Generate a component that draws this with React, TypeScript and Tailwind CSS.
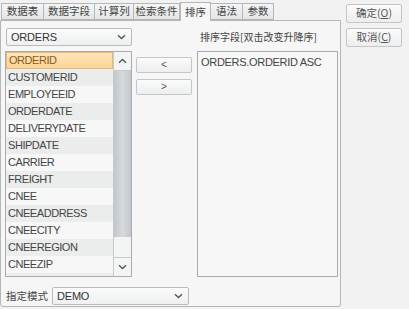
import { FC } from "react";

const FIELDS = [
  "ORDERID",
  "CUSTOMERID",
  "EMPLOYEEID",
  "ORDERDATE",
  "DELIVERYDATE",
  "SHIPDATE",
  "CARRIER",
  "FREIGHT",
  "CNEE",
  "CNEEADDRESS",
  "CNEECITY",
  "CNEEREGION",
  "CNEEZIP",
  "CNEECOUNTRY",
];

const TABS = [
  { label: "数据表", w: "w-[43px]" },
  { label: "数据字段", w: "w-[52px]" },
  { label: "计算列", w: "w-[40px]" },
  { label: "检索条件", w: "w-[47px]" },
  { label: "排序", w: "w-[31px]", active: true },
  { label: "语法", w: "w-[33px]" },
  { label: "参数", w: "w-[32px]" },
];

const cjk = "font-['Noto_Sans_CJK_SC',sans-serif]";
const latin = "font-['Liberation_Sans',Arial,sans-serif]";

const Chevron: FC<{ up?: boolean }> = ({ up }) => (
  <svg width="9" height="6" viewBox="0 0 9 6" className={up ? "rotate-180" : ""}>
    <path d="M1 1.2 L4.5 4.5 L8 1.2" fill="none" stroke="#555" strokeWidth="1.4" />
  </svg>
);

const Select: FC<{ value: string; className: string }> = ({ value, className }) => (
  <div
    className={`${className} flex shrink-0 items-center justify-between rounded-[2px] border border-[#b9bcbf] bg-gradient-to-b from-[#fbfbfb] to-[#eef0f1] pl-[4px] pr-[5px] ${latin} text-[11px] leading-none tracking-[-0.2px] text-[#333]`}
  >
    <span>{value}</span>
    <Chevron />
  </div>
);

const SmallButton: FC<{ children: React.ReactNode; className?: string }> = ({ children, className }) => (
  <div
    className={`${className ?? ""} flex shrink-0 items-center justify-center rounded-[2px] border border-[#c3c5c7] bg-gradient-to-b from-[#fbfbfb] to-[#eceeef] leading-none text-[#555]`}
  >
    {children}
  </div>
);

export default function App() {
  return (
    <div className="flex h-[309px] w-[409px] items-start overflow-hidden bg-[#f1f2f1]">
      {/* tab area */}
      <div className="flex w-[341px] shrink-0 flex-col pt-[2px]">
        <div className="flex h-[18px] shrink-0 items-end pl-[2px]">
          {TABS.map((t) => (
            <div
              key={t.label}
              className={`${t.w} relative flex items-center justify-center border border-[#b4b6b8] ${cjk} text-[10.5px] leading-none text-[#444] ${
                t.active
                  ? "z-10 -mb-px h-[19px] border-b-0 bg-[#f5f6f5]"
                  : "-ml-px h-[17px] bg-gradient-to-b from-[#f4f5f5] to-[#e4e6e7]"
              }`}
            >
              {t.label}
            </div>
          ))}
        </div>

        <div className="flex h-[287px] shrink-0 flex-col rounded-b-[3px] border border-[#b4b6b8] bg-[#f5f6f5] pl-[4px] pr-[2px] pt-[7px]">
          <div className="flex gap-[4px]">
            {/* left column */}
            <div className="flex w-[127px] flex-col">
              <Select value="ORDERS" className="ml-[1px] h-[18px] w-[126px]" />
              <div className="mt-[5px] flex h-[226px] overflow-hidden border border-[#a9acaf] bg-[#f7f7f7]">
                <div className="flex-1 overflow-hidden">
                  {FIELDS.map((f, i) => (
                    <div
                      key={f}
                      className={`flex h-[17px] items-center pl-[2px] ${latin} text-[11px] leading-none tracking-[-0.45px] ${
                        i === 0
                          ? "border border-[#e6b873] bg-gradient-to-b from-[#fde6bd] to-[#fbd394] text-[#8a5a1a]"
                          : i % 2 === 1
                          ? "bg-[#ebecec] text-[#444]"
                          : "bg-[#f7f7f7] text-[#444]"
                      }`}
                    >
                      {f}
                    </div>
                  ))}
                </div>
                <div className="flex w-[18px] flex-col border-l border-[#c7c9cb] bg-[#f3f4f4]">
                  <div className="flex h-[19px] items-center justify-center border-b border-[#c7c9cb]">
                    <Chevron up />
                  </div>
                  <div className="flex flex-1 flex-col">
                    <div className="h-[166px] bg-gradient-to-r from-[#c2c7cc] via-[#d6dadd] to-[#c2c7cc]" />
                  </div>
                  <div className="flex h-[19px] items-center justify-center border-t border-[#c7c9cb]">
                    <Chevron />
                  </div>
                </div>
              </div>
            </div>

            {/* move buttons */}
            <div className="flex w-[56px] flex-col gap-[6px] pt-[29px]">
              <SmallButton className={`h-[16px] ${latin} text-[10px]`}>&lt;</SmallButton>
              <SmallButton className={`h-[16px] ${latin} text-[10px]`}>&gt;</SmallButton>
            </div>

            {/* right column */}
            <div className="ml-[1px] flex flex-1 flex-col">
              <div className={`flex h-[18px] items-center pl-[3px] ${cjk} text-[10px] leading-none text-[#444]`}>
                排序字段[双击改变升降序]
              </div>
              <div className="mt-[5px] h-[226px] border border-[#a9acaf] bg-[#f7f7f7] px-[3px] pt-[2px]">
                <div className={`${latin} text-[11px] tracking-[-0.3px] text-[#444]`}>ORDERS.ORDERID ASC</div>
              </div>
            </div>
          </div>

          <div className="mt-[10px] flex items-center gap-[4px] pl-[1px]">
            <span className={`${cjk} text-[10.5px] leading-none text-[#444]`}>指定模式</span>
            <Select value="DEMO" className="h-[18px] w-[137px]" />
          </div>
        </div>
      </div>

      {/* dialog buttons */}
      <div className="flex flex-col gap-[5px] pl-[5px] pt-[4px]">
        <SmallButton className={`h-[19px] w-[56px] ${cjk} text-[10.5px] text-[#444]`}>
          确定(<span className="underline">O</span>)
        </SmallButton>
        <SmallButton className={`h-[19px] w-[56px] ${cjk} text-[10.5px] text-[#444]`}>
          取消(<span className="underline">C</span>)
        </SmallButton>
      </div>
    </div>
  );
}
